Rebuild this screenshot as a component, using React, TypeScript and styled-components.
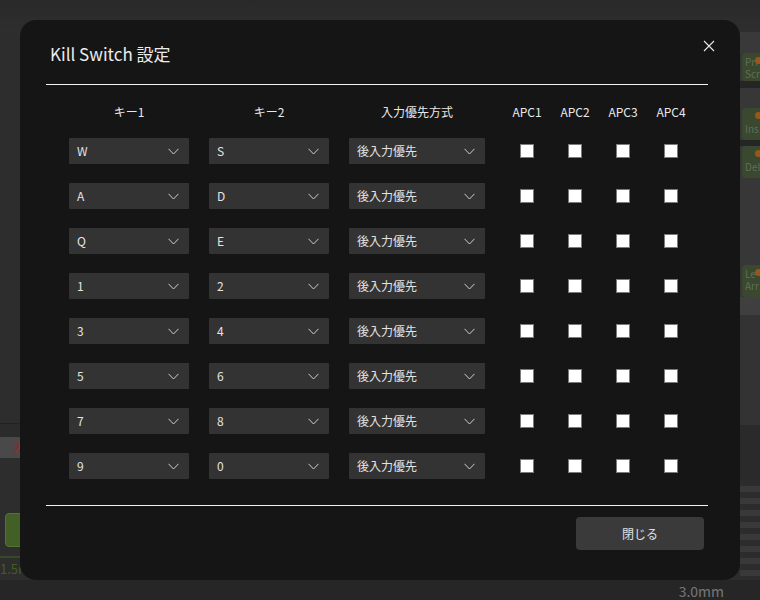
import React from "react";
import styled, { createGlobalStyle } from "styled-components";

const GlobalStyle = createGlobalStyle`
  html, body { margin: 0; padding: 0; background: #2a2a2a; }
  body { font-family: "Noto Sans CJK JP", "Noto Sans", sans-serif; }
  * { box-sizing: border-box; }
`;

/* ---------- background app (dimmed by the backdrop) ---------- */
const BgApp = styled.div`
  width: 760px;
  height: 600px;
  display: flex;
  flex-direction: column;
  background: #4a4a4a;
  overflow: hidden;
`;
const BgTop = styled.div`
  height: 32px;
  flex: none;
  background: linear-gradient(#454545, #4e4e4e);
`;
const BgBody = styled.div`
  flex: 1;
  display: flex;
  min-height: 0;
`;
const BgMain = styled.div`
  flex: 1;
  display: flex;
  flex-direction: column;
  justify-content: flex-end;
  background: #4c4c4c;
`;
const BgStripLine = styled.div`
  height: 14px;
  border-top: 1px solid #3a3a3a;
  background: #484848;
`;
const BgValueBand = styled.div`
  height: 21px;
  background: #7b7b7b;
  color: #f04848;
  font-size: 16px;
  line-height: 21px;
  padding-left: 12px;
`;
const BgGap = styled.div<{ h: number }>`
  height: ${(p) => p.h}px;
`;
const BgGreenRow = styled.div`
  height: 34px;
  display: flex;
  padding-left: 5px;
`;
const BgGreenBtn = styled.div`
  width: 40px;
  height: 34px;
  border-radius: 4px;
  background: #6f9e3f;
  border: 1px solid #8cbf58;
`;
const BgGreenLine = styled.div`
  height: 2px;
  margin-top: 9px;
  background: #5e7a40;
`;
const BgGreenText = styled.div`
  color: #6f9a3a;
  font-size: 13px;
  line-height: 22px;
  height: 22px;
`;
const BgBottom = styled.div`
  height: 20px;
  flex: none;
  display: flex;
  justify-content: flex-end;
  align-items: flex-end;
  padding-right: 36px;
  background: #404040;
  color: #c4c4c4;
  font-size: 14px;
  line-height: 18px;
`;
const BgRight = styled.div`
  width: 20px;
  flex: none;
  display: flex;
  flex-direction: column;
  background: #5c5c5c;
  overflow: hidden;
`;
const BgBand = styled.div<{ h: number; c: string }>`
  height: ${(p) => p.h}px;
  flex: none;
  background: ${(p) => p.c};
`;
const BgKey = styled.div<{ h: number }>`
  position: relative;
  height: ${(p) => p.h}px;
  flex: none;
  margin-left: 2px;
  width: 18px;
  border-radius: 4px 0 0 4px;
  background: #617850;
  color: #9fb78d;
  font-size: 10px;
  line-height: 12px;
  padding: 3px 0 0 3px;
  white-space: pre;
  overflow: hidden;
`;
const BgDot = styled.span`
  position: absolute;
  left: 13px;
  top: 4px;
  width: 7px;
  height: 7px;
  border-radius: 50%;
  background: #ff8f2b;
`;
const BgStripes = styled.div`
  flex: 1;
  background: repeating-linear-gradient(#4a4a4a 0 6px, #606060 6px 12px);
`;

/* ---------- backdrop + modal ---------- */
const Backdrop = styled.div`
  position: fixed;
  inset: 0;
  background: rgba(0, 0, 0, 0.4);
  display: flex;
  align-items: center;
  justify-content: center;
`;
const Modal = styled.div`
  position: relative;
  width: 720px;
  height: 560px;
  background: #151515;
  border-radius: 16px;
  padding: 0 32px 0 26px;
  display: flex;
  flex-direction: column;
  color: #e6e6e6;
`;
const Header = styled.div`
  height: 64px;
  display: flex;
  align-items: center;
  padding: 4px 0 0 4px;
`;
const Title = styled.h2`
  margin: 0;
  font-size: 17px;
  font-weight: 400;
  line-height: 24px;
  color: #ececec;
`;
const CloseX = styled.button`
  position: absolute;
  top: 20px;
  right: 25px;
  width: 12px;
  height: 12px;
  padding: 0;
  border: 0;
  background: transparent;
  display: flex;
  cursor: pointer;
`;
const Divider = styled.div`
  height: 1px;
  flex: none;
  background: #f2f2f2;
`;
const Table = styled.div`
  display: grid;
  grid-template-columns: 140px 140px 164px repeat(4, 48px);
  grid-template-rows: 14px repeat(8, 26px);
  row-gap: 19px;
  margin: 20px 0 26px 13px;
`;
const HeadCell = styled.div<{ wide?: boolean }>`
  display: flex;
  align-items: center;
  justify-content: center;
  padding: ${(p) => (p.wide ? "0 18px 0 10px" : "0")};
  font-size: 12px;
  line-height: 16px;
  color: #e8e8e8;
  white-space: nowrap;
`;
const Cell = styled.div<{ wide?: boolean }>`
  display: flex;
  align-items: center;
  justify-content: center;
  padding: ${(p) => (p.wide ? "0 18px 0 10px" : "0")};
`;
const SelectBox = styled.div<{ w: number }>`
  width: ${(p) => p.w}px;
  height: 26px;
  background: #333333;
  border-radius: 1px;
  display: flex;
  align-items: center;
  justify-content: space-between;
  padding: 0 10px 0 8px;
  font-size: 12px;
  color: #e4e4e4;
  line-height: 16px;
`;
const Check = styled.span`
  width: 14px;
  height: 14px;
  background: #ffffff;
  border: 1px solid #7a7a7a;
  display: block;
`;
const Footer = styled.div`
  display: flex;
  justify-content: flex-end;
  padding: 11px 4px 0 0;
`;
const CloseButton = styled.button`
  width: 128px;
  height: 33px;
  border: 0;
  border-radius: 4px;
  background: #3a3a3a;
  color: #e0e0e0;
  font-family: inherit;
  font-size: 12px;
  cursor: pointer;
`;

const Chevron = () => (
  <svg width="11" height="7" viewBox="0 0 11 7" fill="none">
    <path d="M0.5 0.8 L5.5 6 L10.5 0.8" stroke="#cfcfcf" strokeWidth="1" />
  </svg>
);

const Select = ({ value, w }: { value: string; w: number }) => (
  <SelectBox w={w}>
    <span>{value}</span>
    <Chevron />
  </SelectBox>
);

const rows: [string, string][] = [
  ["W", "S"],
  ["A", "D"],
  ["Q", "E"],
  ["1", "2"],
  ["3", "4"],
  ["5", "6"],
  ["7", "8"],
  ["9", "0"],
];

export default function App() {
  return (
    <>
      <GlobalStyle />
      <BgApp>
        <BgTop />
        <BgBody>
          <BgMain>
            <BgStripLine />
            <BgValueBand>2</BgValueBand>
            <BgGap h={55} />
            <BgGreenRow>
              <BgGreenBtn />
            </BgGreenRow>
            <BgGreenLine />
            <BgGreenText>1.5mm</BgGreenText>
          </BgMain>
          <BgRight>
            <BgBand h={21} c="#5f5f5f" />
            <BgKey h={28}>
              {"Pri\nScr"}
              <BgDot />
            </BgKey>
            <BgBand h={7} c="#3f3f3f" />
            <BgBand h={20} c="#5d5d5d" />
            <BgKey h={32}>
              {"\nIns"}
              <BgDot />
            </BgKey>
            <BgBand h={6} c="#3f3f3f" />
            <BgKey h={32}>
              {"\nDel"}
              <BgDot />
            </BgKey>
            <BgBand h={87} c="#5d5d5d" />
            <BgKey h={32}>
              {"Le\nArr"}
              <BgDot />
            </BgKey>
            <BgBand h={18} c="#6a6a6a" />
            <BgBand h={110} c="#555555" />
            <BgBand h={55} c="#464646" />
            <BgStripes />
          </BgRight>
        </BgBody>
        <BgBottom>3.0mm</BgBottom>
      </BgApp>

      <Backdrop>
        <Modal>
          <Header>
            <Title>Kill Switch 設定</Title>
          </Header>
          <CloseX aria-label="close">
            <svg width="12" height="12" viewBox="0 0 12 12">
              <path d="M1 1 L11 11 M11 1 L1 11" stroke="#e8e8e8" strokeWidth="1.1" />
            </svg>
          </CloseX>
          <Divider />
          <Table>
            <HeadCell>キー1</HeadCell>
            <HeadCell>キー2</HeadCell>
            <HeadCell wide>入力優先方式</HeadCell>
            <HeadCell>APC1</HeadCell>
            <HeadCell>APC2</HeadCell>
            <HeadCell>APC3</HeadCell>
            <HeadCell>APC4</HeadCell>
            {rows.map(([a, b], i) => (
              <React.Fragment key={i}>
                <Cell>
                  <Select value={a} w={120} />
                </Cell>
                <Cell>
                  <Select value={b} w={120} />
                </Cell>
                <Cell wide>
                  <Select value="後入力優先" w={136} />
                </Cell>
                {[0, 1, 2, 3].map((j) => (
                  <Cell key={j}>
                    <Check />
                  </Cell>
                ))}
              </React.Fragment>
            ))}
          </Table>
          <Divider />
          <Footer>
            <CloseButton>閉じる</CloseButton>
          </Footer>
        </Modal>
      </Backdrop>
    </>
  );
}
